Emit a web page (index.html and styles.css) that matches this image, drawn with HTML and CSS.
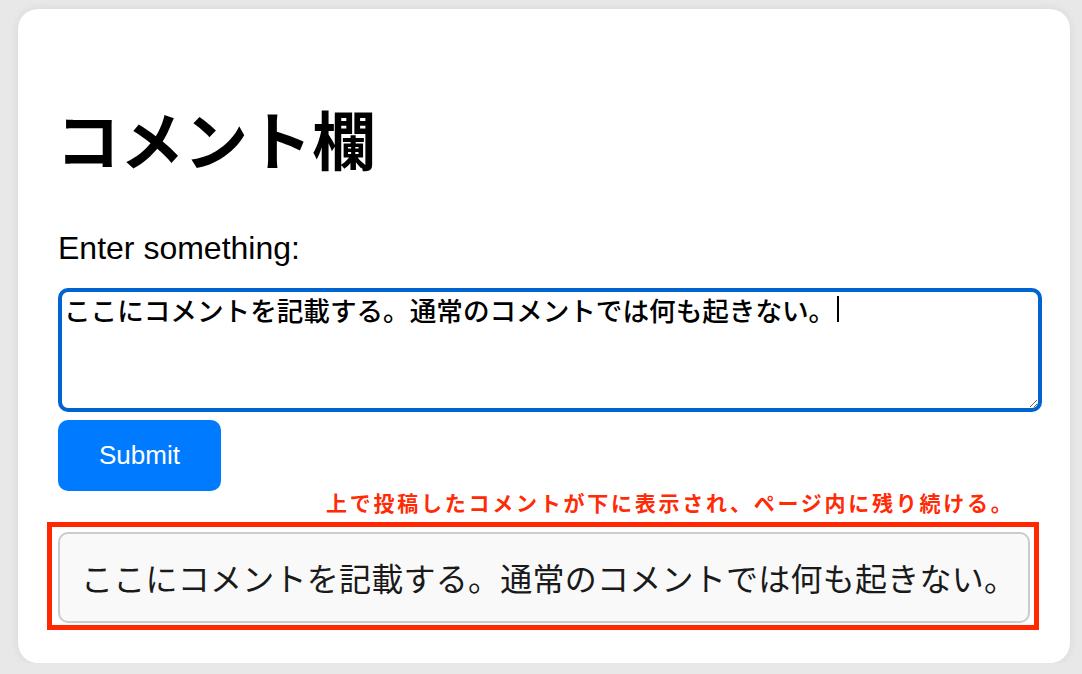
FILE: index.html
```html
<!DOCTYPE html>
<html lang="ja">
<head>
<meta charset="utf-8">
<title>コメント欄</title>
<link rel="stylesheet" href="styles.css">
</head>
<body>
<div class="card">
  <h1 class="title">コメント欄</h1>
  <label class="label" for="comment">Enter something:</label>
  <div class="field">
    <textarea id="comment" class="input">ここにコメントを記載する。通常のコメントでは何も起きない。 </textarea>
    <span class="caret"></span>
  </div>
  <button class="submit" type="button">Submit</button>
  <p class="note">上で投稿したコメントが下に表示され、ページ内に残り続ける。</p>
  <div class="highlight">
    <div class="comment">ここにコメントを記載する。通常のコメントでは何も起きない。</div>
  </div>
</div>
</body>
</html>
```
FILE: styles.css
```css
html, body {
  margin: 0;
  padding: 0;
}
body {
  background: #e8e8e8;
  padding: 9px 12px 0 18px;
  font-family: "Liberation Sans", Arial, "Noto Sans CJK JP", sans-serif;
  color: #000;
}
.card {
  width: 1052px;
  box-sizing: border-box;
  background: #fff;
  border-radius: 20px;
  box-shadow: 0 0 10px rgba(0, 0, 0, 0.08);
  padding: 90px 40px 33px 40px;
  display: flex;
  flex-direction: column;
  align-items: flex-start;
}
.title {
  margin: 0 0 0 -2px;
  font-family: "Noto Sans CJK JP", sans-serif;
  font-weight: 700;
  font-size: 64px;
  line-height: 76px;
}
.label {
  margin-top: 55px;
  font-size: 32px;
  line-height: 37px;
  margin-bottom: 21px;
}
.field {
  position: relative;
  width: 984px;
}
.input {
  display: block;
  width: 984px;
  height: 124px;
  box-sizing: border-box;
  margin: 0;
  border: 4px solid #0064d0;
  border-radius: 10px;
  padding: 2px 2px;
  font-family: "Noto Sans CJK JP", sans-serif;
  font-weight: 500;
  font-size: 26.6px;
  line-height: 32px;
  color: #000;
  background: #fff;
  outline: none;
}
.caret {
  position: absolute;
  left: 779px;
  top: 8px;
  width: 2px;
  height: 26px;
  background: #000;
}
.submit {
  margin-top: 8px;
  width: 163px;
  height: 71px;
  border: none;
  border-radius: 10px;
  background: #007bff;
  color: #fff;
  font-family: "Liberation Sans", Arial, sans-serif;
  font-size: 26px;
  padding: 0;
}
.note {
  margin: -1px 0 0 0;
  padding-left: 268px;
  font-family: "Noto Sans CJK JP", sans-serif;
  font-weight: 700;
  font-size: 21px;
  line-height: 24px;
  letter-spacing: 2.75px;
  color: #ff2b06;
  white-space: nowrap;
}
.highlight {
  margin-top: 8px;
  margin-left: -11px;
  width: 992px;
  box-sizing: border-box;
  border: 5px solid #ff2600;
  padding: 5px 4px 2px 6px;
}
.comment {
  box-sizing: border-box;
  background: #f9f9f9;
  border: 2px solid #cbcbcb;
  border-radius: 10px;
  padding: 20px 21px;
  font-family: "Noto Sans CJK JP", sans-serif;
  font-size: 32px;
  line-height: 47px;
  letter-spacing: 0.25px;
  color: #1a1a1a;
  white-space: nowrap;
}
```
